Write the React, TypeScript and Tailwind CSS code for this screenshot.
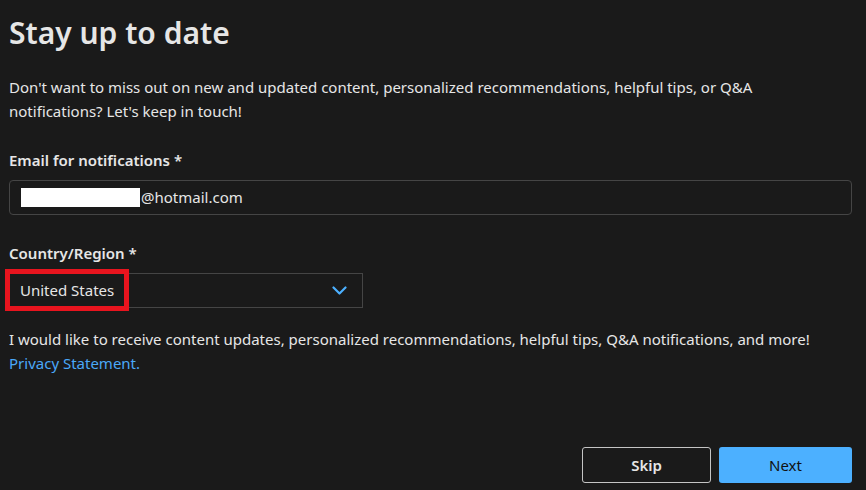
export default function App() {
  return (
    <div className="min-h-screen bg-[#1a1a1a] pl-[9px] pr-[14px] text-[15px] text-[#e6e6e6] [font-family:'Segoe_UI','Noto_Sans',sans-serif]">
      <h1 className="pt-[14px] text-[30px] font-semibold leading-[37px]">Stay up to date</h1>

      <p className="mt-[24px] leading-6">
        Don't want to miss out on new and updated content, personalized recommendations, helpful tips, or Q&amp;A
        <br />
        notifications? Let's keep in touch!
      </p>

      <label className="mt-[25px] block font-semibold leading-6">Email for notifications *</label>
      <div className="mt-2 flex h-[35px] items-center rounded-[4px] border border-[#454545] pl-[11px]">
        <span className="mr-[1px] h-[19px] w-[119px] bg-white" />
        <span>@hotmail.com</span>
      </div>

      <label className="mt-[26px] block font-semibold leading-6">Country/Region *</label>
      <div className="relative mt-2 w-[354px]">
        <div className="flex h-[35px] items-center justify-between border border-[#454545] pl-[10px] pr-[15px]">
          <span>United States</span>
          <svg width="15" height="9" viewBox="0 0 15 9" fill="none" className="text-[#4cb0ff]">
            <path d="M1.5 1.5 7.5 7.5 13.5 1.5" stroke="currentColor" strokeWidth="2.2" strokeLinecap="round" strokeLinejoin="round" />
          </svg>
        </div>
        <div className="absolute left-[-4px] top-[-4px] h-[42px] w-[124px] border-[5px] border-[#e8141e]" />
      </div>

      <p className="mt-[19px] leading-6">
        I would like to receive content updates, personalized recommendations, helpful tips, Q&amp;A notifications, and more!
        <br />
        <a className="text-[#4aa8f8]" href="#">Privacy Statement.</a>
      </p>

      <div className="mt-[72px] flex justify-end gap-2">
        <button className="h-[36px] w-[129px] rounded-[3px] border border-[#c4c4c4] font-semibold text-[#e6e6e6]">Skip</button>
        <button className="h-[36px] w-[133px] rounded-[3px] bg-[#4cb0ff] text-[#111]">Next</button>
      </div>
    </div>
  )
}
